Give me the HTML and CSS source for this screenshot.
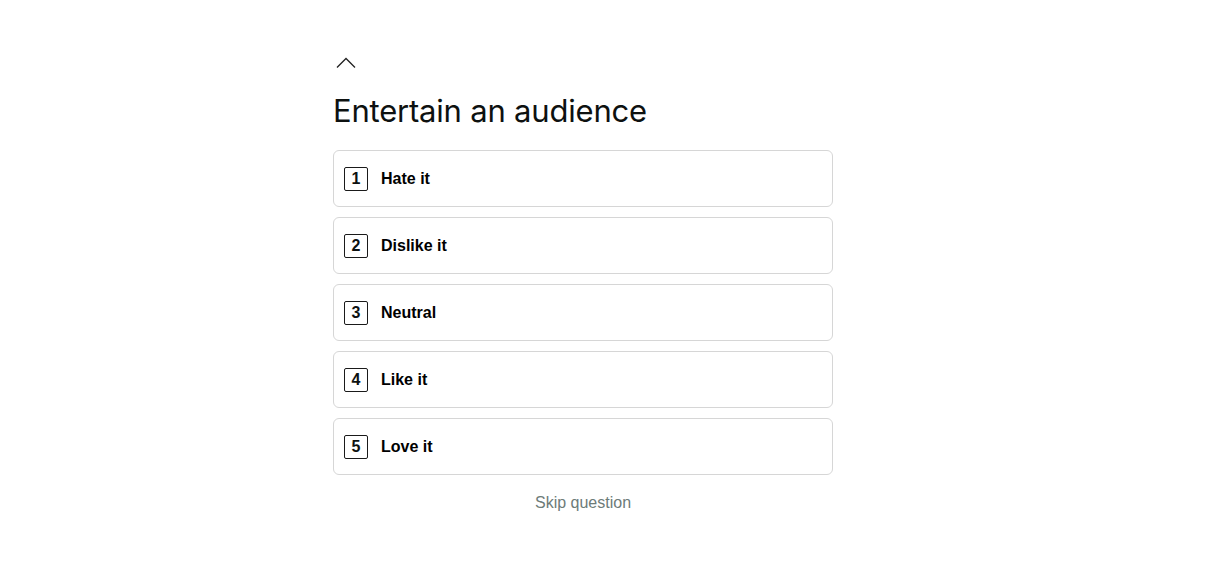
FILE: index.html
```html
<!DOCTYPE html>
<html>
<head>
<meta charset="utf-8">
<link rel="stylesheet" href="styles.css">
</head>
<body>
<main class="page">
  <section class="question">
    <button class="back" aria-label="Previous question">
      <svg width="20" height="14" viewBox="0 0 20 14"><path d="M1 12.5 L10 3.5 L19 12.5" fill="none" stroke="#222" stroke-width="1.3"/></svg>
    </button>
    <h1 class="title">Entertain an audience</h1>
    <ul class="options">
      <li class="option"><span class="key">1</span><span class="label">Hate it</span></li>
      <li class="option"><span class="key">2</span><span class="label">Dislike it</span></li>
      <li class="option"><span class="key">3</span><span class="label">Neutral</span></li>
      <li class="option"><span class="key">4</span><span class="label">Like it</span></li>
      <li class="option"><span class="key">5</span><span class="label">Love it</span></li>
    </ul>
    <div class="skip">Skip question</div>
  </section>
</main>
</body>
</html>
```
FILE: styles.css
```css
html, body {
  margin: 0;
  padding: 0;
  background: #ffffff;
}
.page {
  display: flex;
  justify-content: center;
  padding-right: 43px;
}
.question {
  width: 500px;
  padding-top: 55px;
  display: flex;
  flex-direction: column;
}
.back {
  border: 0;
  background: none;
  padding: 0;
  margin: 0 0 0 3px;
  width: 20px;
  height: 16px;
  display: flex;
  cursor: pointer;
}
.title {
  font-family: Inter, "Liberation Sans", sans-serif;
  font-weight: 400;
  font-size: 31px;
  line-height: 40px;
  color: #0d1110;
  margin: 20px 0 19px 0;
  letter-spacing: -0.2px;
}
.options {
  list-style: none;
  margin: 0;
  padding: 0;
  display: flex;
  flex-direction: column;
  gap: 10px;
}
.option {
  height: 55px;
  border: 1px solid #d6d6d6;
  border-radius: 6px;
  display: flex;
  align-items: center;
  padding: 0 10px;
  gap: 13px;
}
.key {
  width: 22px;
  height: 22px;
  border: 1px solid #1a1a1a;
  border-radius: 2px;
  display: flex;
  align-items: center;
  justify-content: center;
  font-family: "Liberation Sans", Arial, sans-serif;
  font-weight: 700;
  font-size: 16px;
  color: #0d1110;
}
.label {
  font-family: "Liberation Sans", Arial, sans-serif;
  font-weight: 700;
  font-size: 16px;
  color: #000;
}
.skip {
  margin-top: 19px;
  text-align: center;
  font-family: "Liberation Sans", Arial, sans-serif;
  font-size: 16px;
  color: #6d7b79;
}
```
